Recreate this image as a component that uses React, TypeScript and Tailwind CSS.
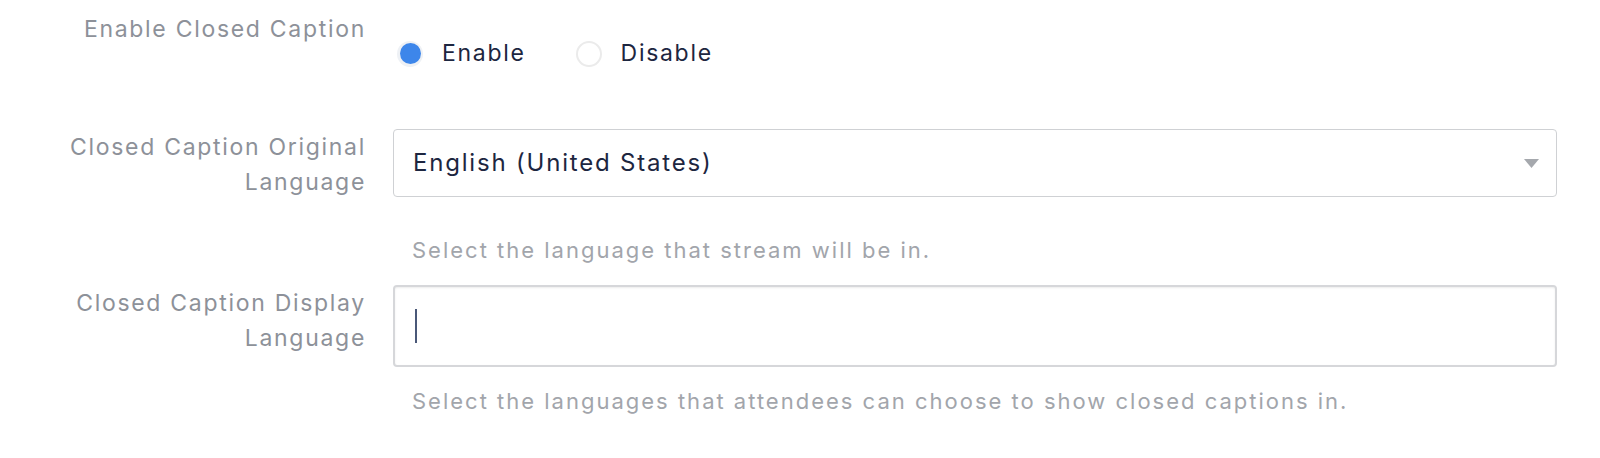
import React from "react";

const font = { fontFamily: "Inter, 'Open Sans', sans-serif" };

function Radio({ label, checked }: { label: string; checked?: boolean }) {
  return (
    <label className="flex items-center gap-[19px] cursor-pointer">
      {checked ? (
        <span className="flex h-[26px] w-[26px] items-center justify-center rounded-full bg-[#eef1f5]">
          <span className="h-[21px] w-[21px] rounded-full bg-[#3d86ea]" />
        </span>
      ) : (
        <span className="h-[26px] w-[26px] rounded-full border-2 border-[#ebebeb] bg-white" />
      )}
      <span className="text-[23px] leading-[35px] tracking-[1.7px] text-[#1d2640]">{label}</span>
    </label>
  );
}

function Row({ label, children }: { label: React.ReactNode; children: React.ReactNode }) {
  return (
    <div className="flex">
      <div className="w-[366px] shrink-0 pt-[1px] text-right text-[23px] leading-[35px] tracking-[1.7px] text-[#8d9199]">
        {label}
      </div>
      <div className="ml-[27px] flex-1">{children}</div>
    </div>
  );
}

export default function App() {
  return (
    <div className="min-h-screen bg-white pr-[43px]" style={font}>
      <div className="pt-[11px]">
        <Row label="Enable Closed Caption">
          <div className="flex items-center gap-[50px] pt-[25px] pl-[4px]">
            <Radio label="Enable" checked />
            <Radio label="Disable" />
          </div>
        </Row>
      </div>

      <div className="mt-[58px]">
        <Row
          label={
            <>
              Closed Caption Original
              <br />
              Language
            </>
          }
        >
          <div className="flex h-[68px] items-center justify-between rounded-[4px] border border-[#cfd1d4] bg-white pl-[19px] pr-[17px]">
            <span className="text-[24px] tracking-[1.8px] text-[#1d2640]">English (United States)</span>
            <svg width="15" height="9" viewBox="0 0 15 9">
              <path d="M0 0 H15 L7.5 9 Z" fill="#a5a8ad" />
            </svg>
          </div>
          <p className="mt-[38px] pl-[19px] text-[22px] leading-[30px] tracking-[2px] text-[#a2a5ab]">
            Select the language that stream will be in.
          </p>
        </Row>
      </div>

      <div className="mt-[20px]">
        <Row
          label={
            <>
              Closed Caption Display
              <br />
              Language
            </>
          }
        >
          <div className="flex h-[82px] items-center rounded-[4px] border-2 border-[#d6d7da] bg-white pl-[20px] shadow-[inset_0_1px_2px_rgba(0,0,0,0.08)]">
            <span className="h-[34px] w-[2px] bg-[#4a5878]" />
          </div>
          <p className="mt-[19px] pl-[19px] text-[22px] leading-[30px] tracking-[2px] text-[#a2a5ab]">
            Select the languages that attendees can choose to show closed captions in.
          </p>
        </Row>
      </div>
    </div>
  );
}
